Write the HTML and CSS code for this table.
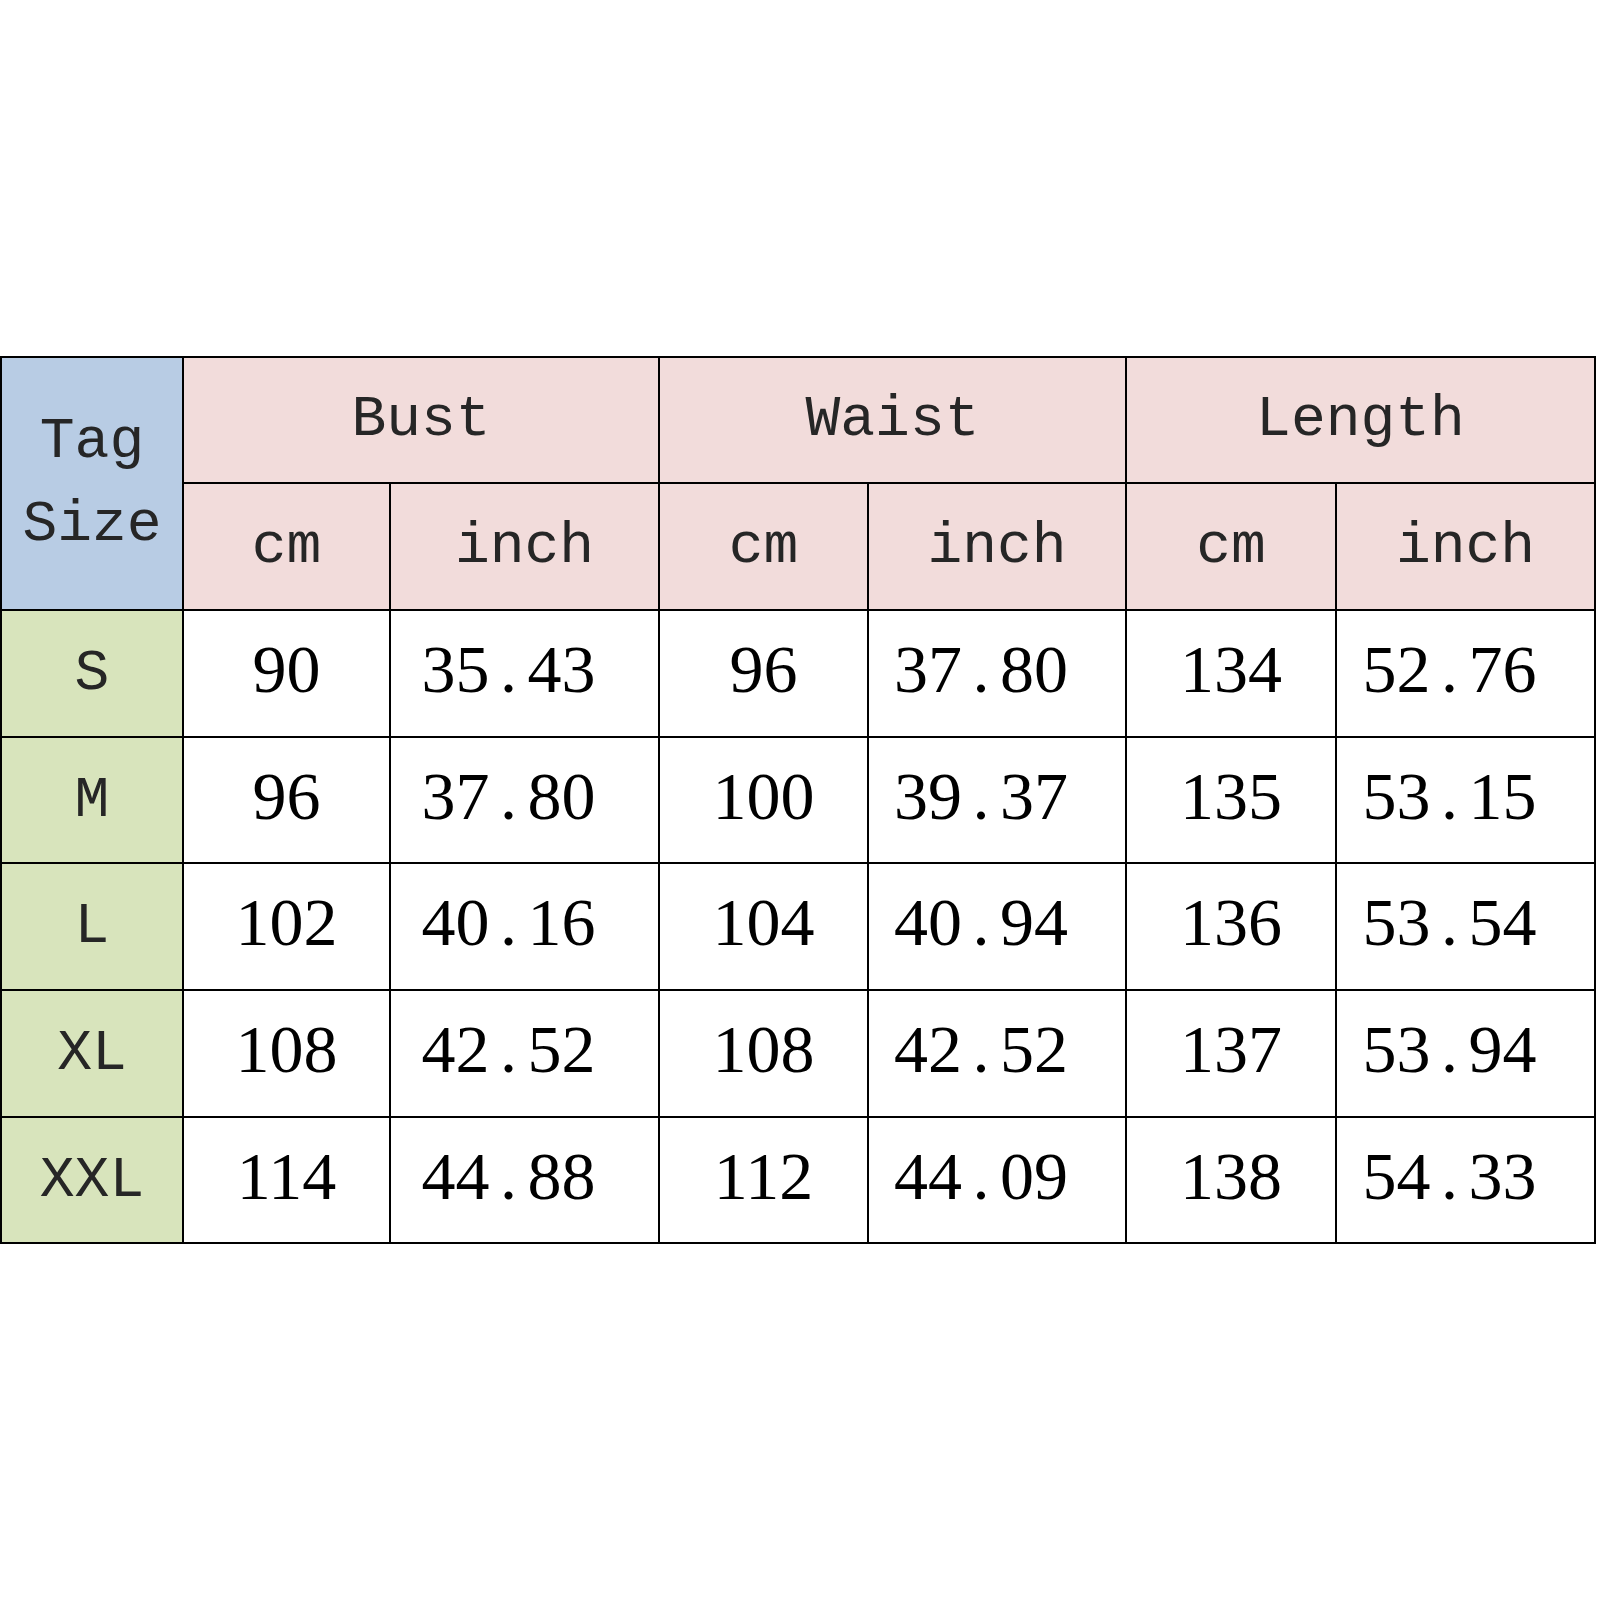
FILE: index.html
```html
<!DOCTYPE html>
<html>
<head>
<meta charset="utf-8">
<link rel="stylesheet" href="styles.css">
</head>
<body>
<table class="chart">
  <colgroup>
    <col class="c-tag">
    <col class="c-a">
    <col class="c-b">
    <col class="c-c">
    <col class="c-d">
    <col class="c-e">
    <col class="c-f">
  </colgroup>
  <thead>
    <tr>
      <th class="tag" rowspan="2">Tag<br>Size</th>
      <th class="grp" colspan="2">Bust</th>
      <th class="grp" colspan="2">Waist</th>
      <th class="grp" colspan="2">Length</th>
    </tr>
    <tr>
      <th class="unit">cm</th><th class="unit">inch</th>
      <th class="unit">cm</th><th class="unit">inch</th>
      <th class="unit">cm</th><th class="unit">inch</th>
    </tr>
  </thead>
  <tbody>
    <tr><th class="size">S</th><td>90</td><td class="in">35<span class="dot">.</span>43</td><td>96</td><td class="in">37<span class="dot">.</span>80</td><td>134</td><td class="in">52<span class="dot">.</span>76</td></tr>
    <tr><th class="size">M</th><td>96</td><td class="in">37<span class="dot">.</span>80</td><td>100</td><td class="in">39<span class="dot">.</span>37</td><td>135</td><td class="in">53<span class="dot">.</span>15</td></tr>
    <tr><th class="size">L</th><td>102</td><td class="in">40<span class="dot">.</span>16</td><td>104</td><td class="in">40<span class="dot">.</span>94</td><td>136</td><td class="in">53<span class="dot">.</span>54</td></tr>
    <tr><th class="size">XL</th><td>108</td><td class="in">42<span class="dot">.</span>52</td><td>108</td><td class="in">42<span class="dot">.</span>52</td><td>137</td><td class="in">53<span class="dot">.</span>94</td></tr>
    <tr><th class="size">XXL</th><td>114</td><td class="in">44<span class="dot">.</span>88</td><td>112</td><td class="in">44<span class="dot">.</span>09</td><td>138</td><td class="in">54<span class="dot">.</span>33</td></tr>
  </tbody>
</table>
</body>
</html>
```
FILE: styles.css
```css
html, body {
  margin: 0;
  padding: 0;
  background: #ffffff;
}

body {
  min-height: 100vh;
  display: flex;
  align-items: center;
  justify-content: flex-start;
}

.chart {
  border-collapse: collapse;
  table-layout: fixed;
  width: 1596px;
  border: 2px solid #000;
}

.c-tag { width: 182px; }
.c-a { width: 207px; }
.c-b { width: 269px; }
.c-c { width: 209px; }
.c-d { width: 258px; }
.c-e { width: 210px; }
.c-f { width: 259px; }

.chart th,
.chart td {
  border: 2px solid #000;
  padding: 0;
  height: 124.7px;
  text-align: center;
  vertical-align: middle;
}

.chart th {
  font-family: "Liberation Mono", "Courier New", monospace;
  font-weight: normal;
  font-size: 58px;
  color: #262626;
}

.chart .tag {
  background: #b8cce4;
  line-height: 83px;
}

.chart .grp,
.chart .unit {
  background: #f2dcdb;
}

.chart .size {
  background: #d8e4bc;
}

.chart td {
  font-family: "Liberation Serif", "Times New Roman", serif;
  font-size: 68px;
  color: #000;
  background: #fff;
  height: 116.7px;
  padding-bottom: 8px;
}

.chart td.in {
  padding-right: 32px;
}

.dot {
  display: inline-block;
  width: 0.56em;
  text-align: center;
}
```
